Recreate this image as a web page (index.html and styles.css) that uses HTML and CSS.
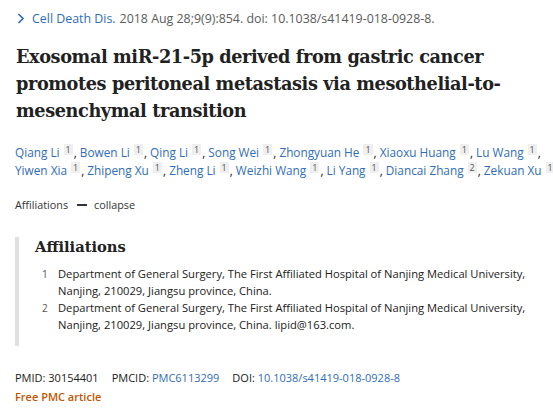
FILE: index.html
```html
<!DOCTYPE html>
<html>
<head>
<meta charset="utf-8">
<link rel="stylesheet" href="styles.css">
</head>
<body>
<div class="page">
  <div class="cite">
    <svg class="chev" width="8" height="11" viewBox="0 0 8 11"><path d="M1.5 1 L6 5.5 L1.5 10" fill="none" stroke="#2a6ebb" stroke-width="1.7"/></svg>
    <a class="journal">Cell Death Dis.</a><span class="cit">2018 Aug 28;9(9):854. doi: 10.1038/s41419-018-0928-8.</span>
  </div>
  <h1 class="title">Exosomal miR-21-5p derived from gastric cancer promotes peritoneal metastasis via mesothelial-to-mesenchymal transition</h1>
  <div class="authors">
    <div class="aline"><a>Qiang Li</a><sup>1</sup>, <a>Bowen Li</a><sup>1</sup>, <a>Qing Li</a><sup>1</sup>, <a>Song Wei</a><sup>1</sup>, <a>Zhongyuan He</a><sup>1</sup>, <a>Xiaoxu Huang</a><sup>1</sup>, <a>Lu Wang</a><sup>1</sup>,</div>
    <div class="aline"><a>Yiwen Xia</a><sup>1</sup>, <a>Zhipeng Xu</a><sup>1</sup>, <a>Zheng Li</a><sup>1</sup>, <a>Weizhi Wang</a><sup>1</sup>, <a>Li Yang</a><sup>1</sup>, <a>Diancai Zhang</a><sup>2</sup>, <a>Zekuan Xu</a><sup>1</sup></div>
  </div>
  <div class="toggle">Affiliations <span class="dash"></span> collapse</div>
  <div class="affbox">
    <h3 class="afftitle">Affiliations</h3>
    <ul class="afflist">
      <li><span class="num">1</span><span class="atext">Department of General Surgery, The First Affiliated Hospital of Nanjing Medical University, Nanjing, 210029, Jiangsu province, China.</span></li>
      <li><span class="num">2</span><span class="atext">Department of General Surgery, The First Affiliated Hospital of Nanjing Medical University, Nanjing, 210029, Jiangsu province, China. lipid@163.com.</span></li>
    </ul>
  </div>
  <div class="ids">
    <span class="id">PMID: 30154401</span>
    <span class="id">PMCID: <a>PMC6113299</a></span>
    <span class="id">DOI: <a>10.1038/s41419-018-0928-8</a></span>
  </div>
  <div class="free">Free PMC article</div>
</div>
</body>
</html>
```
FILE: styles.css
```css
html, body { margin: 0; padding: 0; background: #fff; }
body { font-family: "Open Sans", "Noto Sans", sans-serif; color: #212121; }
.page { padding: 9px 15px 0 15px; }
a { color: #2f6db8; text-decoration: none; }
.cite { display: flex; align-items: center; font-size: 12.4px; height: 18px; color: #5b5b5b; }
.chev { margin-left: 2px; margin-right: 7px; }
.journal { margin-right: 4px; }
.title { font-family: "DejaVu Serif", serif; font-weight: bold; font-size: 17.7px; letter-spacing: -0.4px; line-height: 27px; margin: 16px 0 0 1px; color: #212121; }
.authors { font-size: 11.8px; line-height: 18px; color: #212121; margin-top: 19px; }
.aline { white-space: nowrap; }
.authors sup { display: inline-block; font-size: 9px; background: #efefef; color: #555; padding: 0 2px; margin-left: 4px; margin-right: 1px; line-height: 11px; vertical-align: 4px; }
.toggle { font-size: 10.8px; line-height: 16px; color: #333; margin-top: 18px; display: flex; align-items: center; }
.dash { display: inline-block; width: 10px; height: 2px; background: #333; margin: 0 7px 0 9px; }
.affbox { border-left: 4px solid #e0e0e0; margin-top: 24px; padding: 0 0 13px 16px; }
.afftitle { font-family: "DejaVu Serif", serif; font-weight: bold; font-size: 14.7px; margin: 0 0 7.5px 0; line-height: 20px; color: #212121; }
.afflist { list-style: none; margin: 0; padding: 0; }
.afflist li { display: flex; font-size: 11.2px; line-height: 17px; color: #212121; }
.num { width: 23px; flex: none; font-size: 10px; color: #555; padding-left: 7px; box-sizing: border-box; padding-top: 1px; }
.ids { font-size: 11px; line-height: 16px; margin-top: 24px; color: #212121; display: flex; gap: 13px; }
.free { font-size: 11px; line-height: 16px; color: #c05600; font-weight: 600; margin-top: 3px; }
```
